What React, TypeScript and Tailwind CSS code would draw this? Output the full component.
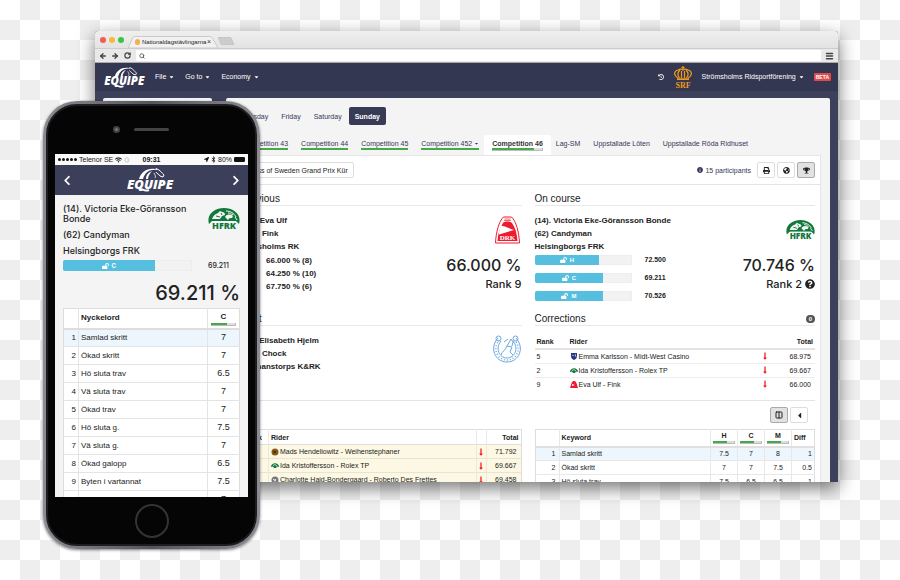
import { useId } from 'react';
import type { ReactNode } from 'react';
import {
  FaBluetoothB,
  FaCaretDown,
  FaCaretLeft,
  FaChevronLeft,
  FaChevronRight,
  FaGlobeAmericas,
  FaHistory,
  FaInfoCircle,
  FaLocationArrow,
  FaLockOpen,
  FaLongArrowAltDown,
  FaPrint,
  FaQuestionCircle,
  FaTrophy,
  FaWifi,
} from 'react-icons/fa';
import { ArrowLeft, ArrowRight, Columns2, Loader, Menu, RotateCw, Search } from 'lucide-react';

const days = ['Thursday', 'Friday', 'Saturday'];

const riders = [
  { name: 'Mads Hendeliowitz - Weihenstephaner', club: 'gold', total: '71.792' },
  { name: 'Ida Kristoffersson - Rolex TP', club: 'green', total: '69.667' },
  { name: 'Charlotte Haid-Bondergaard - Roberto Des Frettes', club: 'gray', total: '69.458' },
];

const corrections = [
  { rank: 5, name: 'Emma Karlsson - Midt-West Casino', club: 'blue', total: '68.975' },
  { rank: 2, name: 'Ida Kristoffersson - Rolex TP', club: 'green', total: '69.667' },
  { rank: 9, name: 'Eva Ulf - Fink', club: 'red', total: '66.000' },
];

const judges = [
  { judge: 'H', width: 67, score: '72.500' },
  { judge: 'C', width: 71, score: '69.211' },
  { judge: 'M', width: 71, score: '70.526' },
];

const keywords = [
  { name: 'Samlad skritt', marks: ['7.5', '7', '8'], diff: '1' },
  { name: 'Ökad skritt', marks: ['7', '7', '7.5'], diff: '0.5' },
  { name: 'Hö sluta trav', marks: ['7.5', '6.5', '6.5'], diff: '1' },
];

const mobileKeywords = [
  { name: 'Samlad skritt', mark: '7' },
  { name: 'Ökad skritt', mark: '7' },
  { name: 'Hö sluta trav', mark: '6.5' },
  { name: 'Vä sluta trav', mark: '7' },
  { name: 'Ökad trav', mark: '7' },
  { name: 'Hö sluta g.', mark: '7.5' },
  { name: 'Vä sluta g.', mark: '7' },
  { name: 'Ökad galopp', mark: '6.5' },
  { name: 'Byten i vartannat', mark: '7.5' },
  { name: 'Byten i varje', mark: '7' },
];

function EquipeLogo({ className }: { className: string }) {
  return (
    <svg viewBox="0 0 50 24" className={className} role="img" aria-label="Equipe">
      <text
        x="0"
        y="21"
        fill="#fff"
        fontFamily="'Open Sans', sans-serif"
        fontWeight="800"
        fontStyle="italic"
        fontSize="13"
      >
        EQUIPE
      </text>
      <path d="M12 11C14 4 20 0 28 1l2-1 0 2c-7-1-12 2-14 9z" fill="#fff" />
      <path d="M19 11c0-4 2-6 6-8-2 2-4 5-4 8z" fill="#fff" />
      <path d="M30 1c3 1 5 4 7 6l-1 2-3-1c-1-2-3-2-4-4" fill="none" stroke="#fff" />
      <path d="M27 5c1 2 2 3 1 5" fill="none" stroke="#fff" strokeWidth=".8" />
      <path d="M13 21c4 0 4 3 9 1" fill="none" stroke="#fff" strokeWidth="2" />
    </svg>
  );
}

function CrownLogo() {
  return (
    <svg viewBox="0 0 18 22" className="h-[22px] w-[18px]" role="img" aria-label="SRF">
      <g fill="none" stroke="#f09a1a" strokeWidth="1.200">
        <path d="M4 12C-1 9 0 5 4 4c2-1 4-1 5 0 1-1 3-1 5 0 4 1 5 5 0 8" />
        <path d="M5.500 12C3 9 4 6 6 4M12.500 12c2.500-3 1.500-6-.5-8M7.500 12V5M10.500 12V5" />
        <path d="M3 13.200h12" strokeWidth="1.800" />
        <path d="M9 0v4M7.500 1.500h3" />
      </g>
      <text
        x="9"
        y="21.500"
        textAnchor="middle"
        fill="#f09a1a"
        fontFamily="'Liberation Serif', serif"
        fontWeight="700"
        fontSize="8"
      >
        SRF
      </text>
    </svg>
  );
}

function HfrkLogo({ className }: { className: string }) {
  return (
    <svg viewBox="0 0 32 22" className={className} role="img" aria-label="HFRK">
      <path d="M1 16C-2 6 7 0 16 0s18 6 15 16l-3-3H4z" fill="#12783c" />
      <path
        d="M4 11c1-3 3-5 6-6l2-2 2 1c2 0 3 1 3 3l-3 1-2 3zM17 9c2-3 5-3 8-1l-1 2c-2 0-3 0-4 2z"
        fill="#f4f4f4"
      />
      <path d="M18 3c4 0 8 2 10 6M20 5c2 0 3 1 5 2M27 9l2 3" stroke="#f4f4f4" fill="none" />
      <path d="M8 8l4 1M13 5l1 2" stroke="#12783c" fill="none" />
      <path d="M5 13h22v9H5z" fill="#f8f8f8" />
      <text
        x="16"
        y="21"
        textAnchor="middle"
        fill="#12783c"
        fontFamily="'Open Sans', sans-serif"
        fontWeight="800"
        fontSize="9"
      >
        HFRK
      </text>
    </svg>
  );
}

function DrkLogo() {
  return (
    <svg viewBox="0 0 25 28" className="mr-[2px] h-7 w-[25px]" role="img" aria-label="DRK">
      <path d="M8.500 1h8C21 5 24 16 24.500 27H.5C1 16 4 5 8.500 1z" fill="#fff" stroke="#ee1c2e" />
      <path d="M8 7c1-2 8-2 9 0 3 4 5 10 5.500 18h-20C3 17 5 11 8 7z" fill="#ee1c2e" />
      <path d="M9.500 3h6M9 4.500h7" stroke="#ee1c2e" strokeWidth=".7" />
      <path d="M5.500 9.500C9 10 14 12 19 14L4 18.500C4 15 4.500 12 5.500 9.500z" fill="#fff" />
      <text
        x="12.500"
        y="24"
        textAnchor="middle"
        fill="#fff"
        fontFamily="'Liberation Serif', serif"
        fontWeight="700"
        fontSize="7"
      >
        DRK
      </text>
    </svg>
  );
}

function HorseshoeLogo() {
  return (
    <svg viewBox="0 0 30 30" className="h-[30px] w-[30px]" role="img" aria-label="Riding club">
      <g fill="none" stroke="#6ba7dc">
        <path d="M6 4C-3 14 3 28 15 28S33 14 24 4" />
        <path d="M9 7C3 14 7 24 15 24s12-10 6-17" />
        <path d="M7.500 6C0 14 5 26 15 26s15-12 7.500-20" strokeWidth="1.500" strokeDasharray="1 2" />
        <circle cx="6.500" cy="4.500" r="2.500" />
        <circle cx="23.500" cy="4.500" r="2.500" />
        <path d="M9 21c1-4 5-5 6-9l4-7 2 3-1 4M15 12l5 1-2 5 3 3M12 8l4-3" />
      </g>
    </svg>
  );
}

function ClubBadge({ club }: { club: string }) {
  if (club === 'green') {
    return (
      <svg viewBox="0 0 8 7" className="h-[7px] w-2 shrink-0">
        <path d="M0 5C0 0 8 0 8 5L6 4.500 5 6H3L2 4.500z" fill="#12783c" />
        <path d="M2 3.500l2-1 2 1.500" stroke="#fff" strokeWidth=".7" fill="none" />
      </svg>
    );
  }
  if (club === 'blue') {
    return (
      <svg viewBox="0 0 8 8" className="h-2 w-2 shrink-0">
        <path d="M1 1h6v3c0 2-1 3-3 4-2-1-3-2-3-4z" fill="#26357e" />
        <path d="M2 3l2 1M5 2l1 3" stroke="#cfd6f5" strokeWidth=".8" />
      </svg>
    );
  }
  if (club === 'red') {
    return (
      <svg viewBox="0 0 8 8" className="h-2 w-2 shrink-0">
        <path d="M3 1h2c2 2 2 4 3 7H0c1-3 1-5 3-7z" fill="#ee1c2e" />
        <path d="M2 4l3 1-3 1z" fill="#fff" />
      </svg>
    );
  }
  return (
    <svg viewBox="0 0 8 8" className="h-2 w-2 shrink-0">
      <circle cx="4" cy="4" r="3.500" fill={club === 'gold' ? '#8a5a1c' : '#777'} />
      <path d="M2 3l3 2M3 5.500l2-2.500" stroke={club === 'gold' ? '#3a2408' : '#eee'} />
    </svg>
  );
}

function Heading({ children, badge }: { children: ReactNode; badge?: string }) {
  return (
    <div className="flex h-[14px] items-center justify-between border-b border-[#e8e8e8]">
      <h2 className="text-[10px] leading-[13px] text-[#222]">{children}</h2>
      {badge && (
        <span className="flex h-2 w-[9px] items-center justify-center rounded-full bg-[#555] text-[6px] leading-[8px] font-bold text-white">
          {badge}
        </span>
      )}
    </div>
  );
}

function ScoreBar({ judge, width, large }: { judge: string; width: number; large?: boolean }) {
  const id = useId();
  return (
    <div
      className={`overflow-hidden rounded-[2px] bg-[#f2f2f2] shadow-[inset_0_0_1px_#ccc] ${
        large ? 'h-[11px] w-[129px]' : 'h-[10px] w-[97px]'
      }`}
      role="progressbar"
      aria-labelledby={id}
      aria-valuenow={width}
    >
      <div
        id={id}
        className="flex h-full items-center justify-center gap-[3px] bg-[#56bfe0] text-[6px] leading-[8px] font-bold text-white"
        style={{ width: `${width}%` }}
      >
        <FaLockOpen className="h-[6px] w-[7px]" />
        {judge}
      </div>
    </div>
  );
}

function JudgeHeader({ judge }: { judge: string }) {
  return (
    <div className="flex flex-col items-center">
      <span>{judge}</span>
      <span className="flex h-[3px] w-full border-r border-b border-[#bbb] bg-[#ddd]">
        <span className="w-2/3 bg-[#45a849]" />
      </span>
    </div>
  );
}

function MenuLink({ children }: { children: ReactNode }) {
  return (
    <a href="#" className="flex items-center gap-[3px]">
      {children}
      <FaCaretDown className="h-[6px] w-[5px]" />
    </a>
  );
}

function CompetitionTab({ children, caret }: { children: ReactNode; caret?: boolean }) {
  return (
    <a href="#" className="mt-[3px] flex h-[12px] items-center border-b-2 border-[#45a849]">
      {children}
      {caret && <FaCaretDown className="ml-[2px] h-[5px] w-[5px]" />}
    </a>
  );
}

function IconButton({ label, active, children }: { label: string; active?: boolean; children: ReactNode }) {
  return (
    <button
      aria-label={label}
      className={`flex h-4 w-[18px] items-center justify-center rounded-[2px] border text-[7px] text-[#222] ${
        active ? 'border-[#aaa] bg-[#e2e2e2]' : 'border-[#ddd] bg-white'
      }`}
    >
      {children}
    </button>
  );
}

function BrowserChrome() {
  return (
    <div className="border-b border-[#aaa] bg-linear-to-b from-[#efefef] to-[#d9d9d9]">
      <div className="flex h-[17px] items-end pl-[5px]">
        <div className="mb-[5px] flex gap-[3px]">
          <span className="h-[6px] w-[6px] rounded-full bg-[#f45b52]" />
          <span className="h-[6px] w-[6px] rounded-full bg-[#f8b93a]" />
          <span className="h-[6px] w-[6px] rounded-full bg-[#35c448]" />
        </div>
        <div className="relative ml-1 flex h-[12px] w-[90px] items-center">
          <svg viewBox="0 0 90 12" className="absolute inset-0 h-full w-full">
            <path d="M0 12L5 1.500Q5.500.5 7 .5h75q1.500 0 2 1L90 12z" fill="#f1f1f1" stroke="#bbb" strokeWidth=".7" />
          </svg>
          <span className="relative ml-[7px] h-[6px] w-[5px] rounded-full bg-[#f3b04c]" />
          <span className="relative ml-[2px] w-[65px] overflow-hidden text-[6px] leading-[10px] whitespace-nowrap text-[#222]">
            Nationaldagstävlingarna
          </span>
          <span className="relative text-[7px] leading-[10px] text-[#333]">×</span>
        </div>
        <svg viewBox="0 0 16 8" className="mb-[3px] h-2 w-4">
          <path d="M0 0h11q2 0 2.500 1.500L16 8H5Q3 8 2.500 6.500z" fill="#ccc" stroke="#bbb" strokeWidth=".6" />
        </svg>
      </div>
      <div className="flex h-[14px] items-center border-t border-[#ccc] bg-[#e9e9e9] pr-1 pl-1 text-[#444]">
        <ArrowLeft className="h-2 w-2" strokeWidth={4} />
        <ArrowRight className="ml-1 h-2 w-2" strokeWidth={4} />
        <RotateCw className="ml-[5px] h-[7px] w-[7px]" strokeWidth={4} />
        <label className="ml-[5px] flex h-[11px] flex-1 items-center rounded-[1px] bg-white pl-[3px]">
          <Search className="h-[6px] w-[6px]" strokeWidth={3} />
          <input aria-label="Address" className="h-full min-w-0 flex-1 text-[6px] outline-none" />
        </label>
        <Menu className="ml-1 h-[10px] w-[9px]" strokeWidth={4} />
      </div>
    </div>
  );
}

function Navbar() {
  return (
    <nav className="flex h-7 items-center bg-[#343751] pr-[7px] pl-[9px] text-[7px] text-white">
      <EquipeLogo className="mr-[7px] h-[21px] w-11" />
      <div className="flex gap-[11px]">
        <MenuLink>File</MenuLink>
        <MenuLink>Go to</MenuLink>
        <MenuLink>Economy</MenuLink>
      </div>
      <div className="ml-auto flex items-center">
        <button aria-label="History">
          <FaHistory className="h-[6px] w-[6px]" />
        </button>
        <span className="mr-[10px] ml-[10px]">
          <CrownLogo />
        </span>
        <MenuLink>Strömsholms Ridsportförening</MenuLink>
        <span className="ml-[10px] flex h-2 items-center rounded-[1px] bg-[#dd4b4b] px-[2px] text-[5px] leading-[8px] font-bold">
          BETA
        </span>
      </div>
    </nav>
  );
}

function Previous() {
  return (
    <section className="h-[120px]">
      <Heading>Previous</Heading>
      <div className="flex justify-between pt-2">
        <div className="text-[8px] leading-[13px] font-bold">
          <p>(10). Eva Ulf</p>
          <p>(103) Fink</p>
          <p>Munsholms RK</p>
          <div className="mt-[1px] pl-[25px]">
            <p>66.000 % (8)</p>
            <p>64.250 % (10)</p>
            <p>67.750 % (6)</p>
          </div>
        </div>
        <div className="flex flex-col items-end pt-[2px] font-['Inter',sans-serif] font-medium text-[#222]">
          <DrkLogo />
          <p className="mt-[11px] text-[16px] leading-5">66.000 %</p>
          <p className="text-[11px] leading-[18px]">Rank 9</p>
        </div>
      </div>
    </section>
  );
}

function OnCourse() {
  return (
    <section className="h-[120px]">
      <Heading>On course</Heading>
      <div className="flex justify-between pt-2">
        <div className="text-[8px] leading-[13px] font-bold">
          <p>(14). Victoria Eke-Göransson Bonde</p>
          <p>(62) Candyman</p>
          <p>Helsingborgs FRK</p>
          <div className="mt-[2px] flex flex-col gap-2">
            {judges.map((item) => (
              <div key={item.judge} className="flex items-center gap-[13px]">
                <ScoreBar judge={item.judge} width={item.width} />
                <span className="text-[7px] leading-[10px]">{item.score}</span>
              </div>
            ))}
          </div>
        </div>
        <div className="flex flex-col items-end pt-[6px] font-['Inter',sans-serif] font-medium text-[#222]">
          <HfrkLogo className="h-5 w-[29px]" />
          <p className="mt-[15px] text-[16px] leading-5">70.746 %</p>
          <p className="flex items-center gap-[3px] text-[11px] leading-[18px]">
            Rank 2 <FaQuestionCircle className="h-[10px] w-[10px]" />
          </p>
        </div>
      </div>
    </section>
  );
}

function Next() {
  return (
    <section>
      <Heading>Next</Heading>
      <div className="flex justify-between pt-2">
        <div className="text-[8px] leading-[13px] font-bold">
          <p>(11). Elisabeth Hjelm</p>
          <p>(107) Chock</p>
          <p>Hermanstorps K&amp;RK</p>
        </div>
        <HorseshoeLogo />
      </div>
    </section>
  );
}

function Corrections() {
  return (
    <section>
      <Heading badge="0">Corrections</Heading>
      <table className="mt-[9px] w-full text-left">
        <thead>
          <tr className="h-[14px] border-b-2 border-[#e4e4e4]">
            <th className="w-[33px] pl-[2px]">Rank</th>
            <th className="pl-[2px]">Rider</th>
            <th className="w-[13px]" aria-label="Change" />
            <th className="w-[40px] pr-[2px] text-right">Total</th>
          </tr>
        </thead>
        <tbody>
          {corrections.map((item) => (
            <tr key={item.rank} className="h-[14px] border-b border-[#eee] last:border-0">
              <td className="pl-[2px]">{item.rank}</td>
              <td className="pl-[2px]">
                <span className="flex items-center gap-[1px]">
                  <ClubBadge club={item.club} />
                  {item.name}
                </span>
              </td>
              <td>
                <FaLongArrowAltDown className="h-2 w-[6px] text-[#f01818]" />
              </td>
              <td className="pr-1 text-right">{item.total}</td>
            </tr>
          ))}
        </tbody>
      </table>
    </section>
  );
}

function RankingTable() {
  return (
    <table className="w-full self-start border border-[#ddd] text-left">
      <thead>
        <tr className="h-[15px] border-b border-[#ddd]">
          <th className="w-[27px] pr-[6px] text-right">Rank</th>
          <th className="border-l border-[#e8e8e8] pl-[2px]">Rider</th>
          <th className="w-[10px] border-l border-[#e8e8e8]" aria-label="Change" />
          <th className="w-[35px] border-l border-[#e8e8e8] pr-[2px] text-right">Total</th>
        </tr>
      </thead>
      <tbody>
        {riders.map((rider, index) => (
          <tr key={rider.name} className="h-[14px] border-b border-[#e8e4d4] bg-[#fcf8e3]">
            <td className="pl-[2px]">{index + 1}</td>
            <td className="border-l border-[#ece8d8] pl-[2px]">
              <span className="flex items-center gap-[1px] whitespace-nowrap">
                <ClubBadge club={rider.club} />
                {rider.name}
              </span>
            </td>
            <td className="border-l border-[#ece8d8]">
              <FaLongArrowAltDown className="mx-auto h-2 w-[6px] text-[#f01818]" />
            </td>
            <td className="border-l border-[#ece8d8] pr-1 text-right">{rider.total}</td>
          </tr>
        ))}
      </tbody>
    </table>
  );
}

function KeywordTable() {
  return (
    <table className="w-full self-start border border-[#ddd] text-center">
      <thead>
        <tr className="h-[17px] border-b-2 border-[#e0e0e0]">
          <th className="w-6" aria-label="Number" />
          <th className="border-l border-[#e8e8e8] pl-[2px] text-left">Keyword</th>
          {judges.map((item) => (
            <th key={item.judge} className="w-[27px] border-l border-[#e8e8e8] px-[2px] leading-[10px]">
              <JudgeHeader judge={item.judge} />
            </th>
          ))}
          <th className="w-[23px] border-l border-[#e8e8e8] pl-[2px] text-left">Diff</th>
        </tr>
      </thead>
      <tbody>
        {keywords.map((item, index) => (
          <tr key={item.name} className="h-[14px] border-b border-[#e8e8e8] first:bg-[#edf6fc]">
            <td className="pr-[3px] text-right">{index + 1}</td>
            <td className="border-l border-[#e8e8e8] pl-[2px] text-left">{item.name}</td>
            {item.marks.map((mark, i) => (
              <td key={judges[i].judge} className="border-l border-[#e8e8e8]">
                {mark}
              </td>
            ))}
            <td className="border-l border-[#e8e8e8] pr-[2px] text-right">{item.diff}</td>
          </tr>
        ))}
      </tbody>
    </table>
  );
}

function BrowserWindow() {
  return (
    <div className="flex min-w-0 flex-1 flex-col overflow-hidden rounded-t-[3px] bg-[#3d405a] shadow-[0_6px_18px_rgba(0,0,0,0.55)]">
      <BrowserChrome />
      <Navbar />
      <div className="flex min-h-0 flex-1 gap-[14px] px-2 pt-[7px]">
        <aside className="w-[109px] rounded-t-[2px] bg-[#f4f4f4]" />
        <div className="min-w-0 flex-1 rounded-t-[2px] bg-[#f4f4f4] px-[9px] pt-[9px] text-[7px] leading-[11px] text-[#222]">
          <div className="flex h-[18px] items-center gap-[13px] text-[#34375a]">
            <div className="flex gap-[13px] pl-1">
              {days.map((day) => (
                <a key={day} href="#">
                  {day}
                </a>
              ))}
            </div>
            <button className="-ml-[6px] h-[18px] rounded-[2px] bg-[#383b56] px-[6px] font-bold text-white">
              Sunday
            </button>
          </div>
          <div className="mt-[10px] flex h-5 gap-[13px] pl-[6px] text-[#34375a]">
            <CompetitionTab>Competition 43</CompetitionTab>
            <CompetitionTab>Competition 44</CompetitionTab>
            <CompetitionTab>Competition 45</CompetitionTab>
            <CompetitionTab caret>Competition 452</CompetitionTab>
            <a href="#" className="-mx-2 h-5 rounded-t-[2px] bg-white px-2 pt-[3px] font-bold text-[#333]">
              <span className="block h-[10px]">Competition 46</span>
              <span className="flex h-[3px] border-r border-b border-[#bbb] bg-[#ddd]">
                <span className="w-5/6 bg-[#45a849]" />
              </span>
            </a>
            <a href="#" className="mt-[3px]">Lag-SM</a>
            <a href="#" className="mt-[3px]">Uppstallade Löten</a>
            <a href="#" className="mt-[3px]">Uppstallade Röda Ridhuset</a>
          </div>
          <div className="border border-b-0 border-[#e6e6e6] bg-white">
            <div className="flex h-[29px] items-center gap-[2px] border-b border-[#e4e4e4] px-[5px]">
              <button className="h-4 rounded-[2px] border border-[#ddd] px-[5px]">
                Class of Sweden Grand Prix Kür
              </button>
              <span className="mr-1 ml-auto flex items-center gap-[2px] text-[#34375a]">
                <FaInfoCircle className="h-[6px] w-[6px]" />
                15 participants
              </span>
              <IconButton label="Print">
                <FaPrint />
              </IconButton>
              <IconButton label="Publish">
                <FaGlobeAmericas />
              </IconButton>
              <IconButton label="Results" active>
                <FaTrophy />
              </IconButton>
            </div>
            <div className="grid grid-cols-2 gap-x-[13px] px-[5px] pt-[7px]">
              <Previous />
              <OnCourse />
              <Next />
              <Corrections />
            </div>
            <div className="mx-[5px] mt-[9px] flex h-[29px] items-center justify-end gap-[2px] border-t border-[#e4e4e4] pr-[7px]">
              <IconButton label="Split view" active>
                <Columns2 className="h-2 w-2" strokeWidth={3} />
              </IconButton>
              <IconButton label="Collapse">
                <FaCaretLeft className="h-[9px] w-[9px]" />
              </IconButton>
            </div>
            <div className="grid grid-cols-2 gap-x-[13px] px-[5px]">
              <RankingTable />
              <KeywordTable />
            </div>
          </div>
        </div>
      </div>
    </div>
  );
}

function StatusBar() {
  return (
    <div className="flex h-[11px] items-center bg-[#fafafa] px-[3px] text-[7px] leading-[10px] text-[#111]">
      <div className="flex flex-1 items-center gap-[2px]">
        <span className="flex gap-[1px]">
          {[1, 2, 3, 4, 5].map((dot) => (
            <span key={dot} className="h-[3px] w-[3px] rounded-full bg-[#111]" />
          ))}
        </span>
        Telenor SE
        <FaWifi className="h-[6px] w-[7px]" />
        <Loader className="h-[6px] w-[6px] text-[#999]" />
      </div>
      <span className="font-bold">09:31</span>
      <div className="flex flex-1 items-center justify-end gap-[2px]">
        <FaLocationArrow className="h-[5px] w-[5px]" />
        <FaBluetoothB className="h-[7px] w-[5px]" />
        80%
        <span className="h-[5px] w-[11px] rounded-[1px] border border-[#111] bg-[#111]" />
      </div>
    </div>
  );
}

function Phone() {
  return (
    <div className="absolute top-[101px] left-[43px] w-[217px] rounded-[34px] bg-linear-to-r from-[#8d8c92] via-[#55555a] to-[#8d8c92] p-[3px] shadow-[0_1px_3px_rgba(0,0,0,0.5)]">
      <div className="flex flex-col items-center rounded-[31px] border-2 border-[#1e1e20] bg-[#050505] px-2">
        <div className="flex h-12 w-full items-center gap-[14px] pb-[2px] pl-[57px]">
          <span className="h-[7px] w-[7px] rounded-full border-2 border-[#444] bg-[#777]" />
          <span className="h-[3px] w-[35px] rounded-full bg-[#444]" />
        </div>
        <div className="h-[343px] w-[193px] overflow-hidden bg-[#f4f4f4] text-[#222]">
          <StatusBar />
          <div className="flex h-[30px] items-center justify-between bg-[#3c3f5a] px-2 text-white">
            <button aria-label="Back">
              <FaChevronLeft className="h-[11px] w-2" />
            </button>
            <EquipeLogo className="h-6 w-[50px]" />
            <button aria-label="Forward">
              <FaChevronRight className="h-[11px] w-2" />
            </button>
          </div>
          <div className="px-2 pt-[9px]">
            <div className="flex justify-between font-['Inter',sans-serif] text-[9px] leading-[10px] font-medium">
              <div>
                <p>
                  (14). Victoria Eke-Göransson
                  <br />
                  Bonde
                </p>
                <p className="mt-[6px]">(62) Candyman</p>
                <p className="mt-[6px]">Helsingborgs FRK</p>
              </div>
              <HfrkLogo className="mt-1 h-[22px] w-8" />
            </div>
            <div className="mt-1 flex items-center gap-4 font-['Inter',sans-serif] text-[7px] font-medium">
              <ScoreBar judge="C" width={71} large />
              <span className="leading-[11px]">69.211</span>
            </div>
            <p className="mt-[10px] text-right font-['Inter',sans-serif] text-[20px] leading-6 font-medium">
              69.211 %
            </p>
            <table className="mt-[3px] w-full border border-[#ddd] bg-white text-[8px]">
              <thead>
                <tr className="h-5 border-b-2 border-[#ddd]">
                  <th className="w-[15px]" aria-label="Nummer" />
                  <th className="border-l border-[#e4e4e4] pl-[2px] text-left">Nyckelord</th>
                  <th className="w-8 border-l border-[#e4e4e4] px-[3px] leading-[12px]">
                    <JudgeHeader judge="C" />
                  </th>
                </tr>
              </thead>
              <tbody>
                {mobileKeywords.map((item, index) => (
                  <tr key={item.name} className="h-[18px] border-b border-[#e4e4e4] first:bg-[#edf6fc]">
                    <td className="pr-[2px] text-right">{index + 1}</td>
                    <td className="border-l border-[#e4e4e4] pl-[2px]">{item.name}</td>
                    <td className="border-l border-[#e4e4e4] text-center text-[9px]">{item.mark}</td>
                  </tr>
                ))}
              </tbody>
            </table>
          </div>
        </div>
        <div className="flex h-[47px] items-center">
          <button aria-label="Home" className="h-[34px] w-[34px] rounded-full border-2 border-[#333338]" />
        </div>
      </div>
    </div>
  );
}

export default function App() {
  return (
    <main className="relative flex h-screen bg-[repeating-conic-gradient(#eee_0_25%,#fff_0_50%)] bg-[length:40px_40px] pt-[31px] pr-[62px] pb-[98px] pl-[95px] font-['Liberation_Sans',Arial,sans-serif]">
      <BrowserWindow />
      <Phone />
    </main>
  );
}
